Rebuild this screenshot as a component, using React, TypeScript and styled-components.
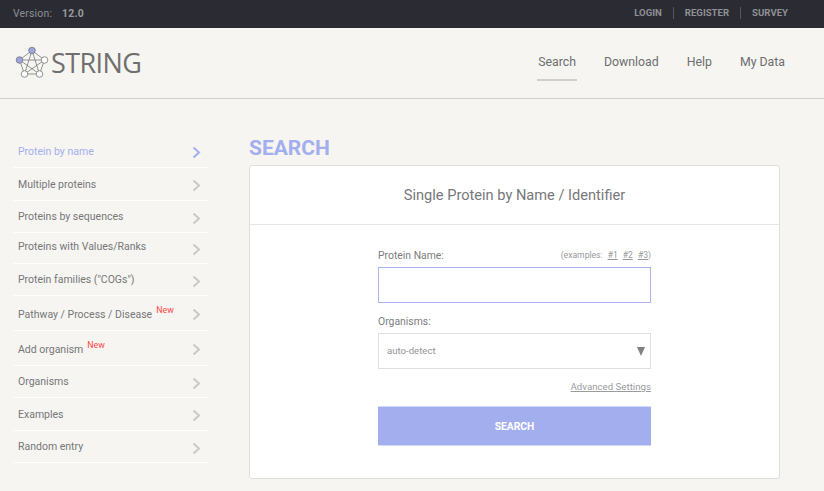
import styled, { createGlobalStyle } from 'styled-components';

const GlobalStyle = createGlobalStyle`
  html, body {
    margin: 0;
    padding: 0;
    height: 491px;
    overflow: hidden;
    background-color: #f6f5f1;
    font-family: Roboto, "Liberation Sans", sans-serif;
  }
`;

const TopBar = styled.div`
  height: 28px;
  background-color: #2b2c33;
  display: flex;
  align-items: center;
  justify-content: space-between;
  padding: 0 25px 2px 13px;
  box-sizing: border-box;
  font-size: 10.4px;
  color: #8f9094;
`;

const VersionText = styled.div`
  display: flex;
  gap: 10px;
  letter-spacing: 0.2px;
`;

const VersionNumber = styled.span`
  font-weight: 700;
  color: #9a9b9e;
`;

const TopLinks = styled.div`
  display: flex;
  align-items: center;
`;

const TopLink = styled.a`
  font-size: 9.6px;
  font-weight: 700;
  color: #8f9094;
  padding: 0 11px;
  line-height: 12px;
  border-left: ${(p: { $first?: boolean }) => (p.$first ? 'none' : '1px solid #56575c')};
`;

const Header = styled.div`
  height: 71px;
  box-sizing: border-box;
  border-bottom: 1px solid #cfcfcb;
  display: flex;
  align-items: flex-start;
  justify-content: space-between;
  padding: 0 38px 0 15px;
`;

const Logo = styled.div`
  display: flex;
  align-items: center;
  gap: 2px;
  height: 68px;
`;

const LogoText = styled.span`
  font-family: "Open Sans", sans-serif;
  font-size: 27px;
  color: #6f6f6f;
  letter-spacing: -0.6px;
`;

const MainNav = styled.nav`
  display: flex;
  gap: 26px;
  padding-top: 25px;
`;

const NavItem = styled.a<{ $active?: boolean }>`
  font-size: 12.3px;
  line-height: 19px;
  color: #6d6e70;
  padding: 0 1px 7px;
  border-bottom: 2px solid ${(p) => (p.$active ? '#cfcfcb' : 'transparent')};
`;

const Content = styled.div`
  display: flex;
  align-items: flex-start;
`;

const Sidebar = styled.ul`
  list-style: none;
  margin: 36px 0 0 14px;
  padding: 0;
  width: 195px;
`;

const SideItem = styled.li<{ $h: number; $active?: boolean; $isNew?: boolean }>`
  height: ${(p) => p.$h}px;
  box-sizing: border-box;
  border-bottom: 1px solid #ffffff;
  display: flex;
  align-items: center;
  justify-content: space-between;
  padding: ${(p) => (p.$isNew ? '3px' : '0')} 8px 0 4px;
  font-size: 10.5px;
  color: ${(p) => (p.$active ? '#a3aeee' : '#76777a')};
`;

const ItemLabel = styled.span<{ $lift?: number }>`
  margin-bottom: ${(p) => p.$lift ?? 0}px;
`;

const ChevronSlot = styled.span<{ $isNew?: boolean }>`
  display: flex;
  margin-top: ${(p) => (p.$isNew ? '-1px' : '3px')};
`;

const NewTag = styled.sup`
  color: #ff4646;
  font-size: 8.8px;
  line-height: 0;
  margin-left: 4px;
  vertical-align: 5px;
`;

const Main = styled.main`
  margin: 37px 0 0 40px;
  width: 531px;
`;

const Title = styled.h1`
  margin: 0;
  font-size: 21px;
  line-height: 24px;
  font-weight: 700;
  color: #a3aeee;
  height: 29px;
`;

const Card = styled.section`
  box-sizing: border-box;
  height: 314px;
  background-color: #fff;
  border: 1px solid #dfdfdc;
  border-radius: 3px;
`;

const CardHeader = styled.div`
  height: 58px;
  border-bottom: 1px solid #e6e6e4;
  display: flex;
  align-items: center;
  justify-content: center;
  font-size: 14.6px;
  color: #77787a;
`;

const Form = styled.form`
  width: 273px;
  margin: 0 auto;
  padding-top: 23px;
  display: flex;
  flex-direction: column;
`;

const LabelRow = styled.div`
  display: flex;
  align-items: center;
  justify-content: space-between;
  height: 14px;
  margin-bottom: 5px;
`;

const FieldLabel = styled.label`
  font-size: 10.4px;
  color: #7b7c7e;
`;

const ExampleNote = styled.span`
  font-size: 8.6px;
  color: #97989a;
`;

const ExampleLink = styled.a`
  text-decoration: underline;
  margin-left: 5px;
`;

const NameInput = styled.input`
  box-sizing: border-box;
  height: 36px;
  width: 100%;
  border: 1px solid #a9b3ee;
  background: #fff;
  outline: none;
  margin-bottom: 11px;
`;

const SelectBox = styled.div`
  box-sizing: border-box;
  height: 36px;
  border: 1px solid #dfdfdc;
  display: flex;
  align-items: center;
  justify-content: space-between;
  padding: 0 5px 2px 8px;
  font-size: 9.6px;
  color: #939496;
`;

const Caret = styled.span`
  width: 0;
  height: 0;
  margin-top: 2px;
  border-left: 4px solid transparent;
  border-right: 4px solid transparent;
  border-top: 9px solid #808183;
`;

const AdvancedLink = styled.a`
  align-self: flex-end;
  margin-top: 11px;
  height: 26px;
  line-height: 13px;
  font-size: 9.7px;
  color: #9a9b9d;
  text-decoration: underline;
`;

const SearchButton = styled.button`
  box-sizing: border-box;
  height: 40px;
  width: 100%;
  border: none;
  border-top: 1px solid #d5daf7;
  border-bottom: 1px solid #d5daf7;
  background-color: #a3aeee;
  color: #fff;
  font-family: inherit;
  font-size: 10.3px;
  font-weight: 700;
`;

const ChevronIcon = ({ color }: { color: string }) => (
  <svg width="9" height="13" viewBox="0 0 9 13" fill="none">
    <path d="M1.5 1.5 L7 6.5 L1.5 11.5" stroke={color} strokeWidth="2" />
  </svg>
);

const LogoIcon = () => {
  const nodes = [
    { x: 17, y: 4.5, fill: '#9aa6dc' },
    { x: 29.5, y: 14, fill: '#fff' },
    { x: 24.5, y: 28, fill: '#fff' },
    { x: 9.5, y: 28, fill: '#fff' },
    { x: 4.5, y: 14, fill: '#9aa6dc' },
  ];
  return (
    <svg width="34" height="33" viewBox="0 0 34 33" fill="none">
      {nodes.map((a, i) =>
        nodes.slice(i + 1).map((b, j) => (
          <line key={`${i}-${j}`} x1={a.x} y1={a.y} x2={b.x} y2={b.y} stroke="#77787a" strokeWidth="0.8" />
        ))
      )}
      {nodes.map((n, i) => (
        <circle key={i} cx={n.x} cy={n.y} r="3.3" fill={n.fill} stroke="#77787a" strokeWidth="0.8" />
      ))}
    </svg>
  );
};

const menuItems = [
  { label: 'Protein by name', h: 33, active: true },
  { label: 'Multiple proteins', h: 33 },
  { label: 'Proteins by sequences', h: 32 },
  { label: 'Proteins with Values/Ranks', h: 31, lift: 3 },
  { label: 'Protein families ("COGs")', h: 32 },
  { label: 'Pathway / Process / Disease', h: 35, isNew: true },
  { label: 'Add organism', h: 35, isNew: true },
  { label: 'Organisms', h: 32 },
  { label: 'Examples', h: 33 },
  { label: 'Random entry', h: 32 },
];

const App = () => {
  return (
    <>
      <GlobalStyle />
      <TopBar>
        <VersionText>
          <span>Version:</span>
          <VersionNumber>12.0</VersionNumber>
        </VersionText>
        <TopLinks>
          <TopLink $first>LOGIN</TopLink>
          <TopLink>REGISTER</TopLink>
          <TopLink>SURVEY</TopLink>
        </TopLinks>
      </TopBar>
      <Header>
        <Logo>
          <LogoIcon />
          <LogoText>STRING</LogoText>
        </Logo>
        <MainNav>
          <NavItem $active>Search</NavItem>
          <NavItem>Download</NavItem>
          <NavItem>Help</NavItem>
          <NavItem>My Data</NavItem>
        </MainNav>
      </Header>
      <Content>
        <Sidebar>
          {menuItems.map((item) => (
            <SideItem key={item.label} $h={item.h} $active={item.active} $isNew={item.isNew}>
              <ItemLabel $lift={item.lift}>
                {item.label}
                {item.isNew && <NewTag>New</NewTag>}
              </ItemLabel>
              <ChevronSlot $isNew={item.isNew}>
                <ChevronIcon color={item.active ? '#a3aeee' : '#c9c9c7'} />
              </ChevronSlot>
            </SideItem>
          ))}
        </Sidebar>
        <Main>
          <Title>SEARCH</Title>
          <Card>
            <CardHeader>Single Protein by Name / Identifier</CardHeader>
            <Form>
              <LabelRow>
                <FieldLabel>Protein Name:</FieldLabel>
                <ExampleNote>
                  (examples:
                  <ExampleLink>#1</ExampleLink>
                  <ExampleLink>#2</ExampleLink>
                  <ExampleLink>#3</ExampleLink>)
                </ExampleNote>
              </LabelRow>
              <NameInput />
              <LabelRow>
                <FieldLabel>Organisms:</FieldLabel>
              </LabelRow>
              <SelectBox>
                auto-detect
                <Caret />
              </SelectBox>
              <AdvancedLink>Advanced Settings</AdvancedLink>
              <SearchButton type="button">SEARCH</SearchButton>
            </Form>
          </Card>
        </Main>
      </Content>
    </>
  );
};

export default App;
